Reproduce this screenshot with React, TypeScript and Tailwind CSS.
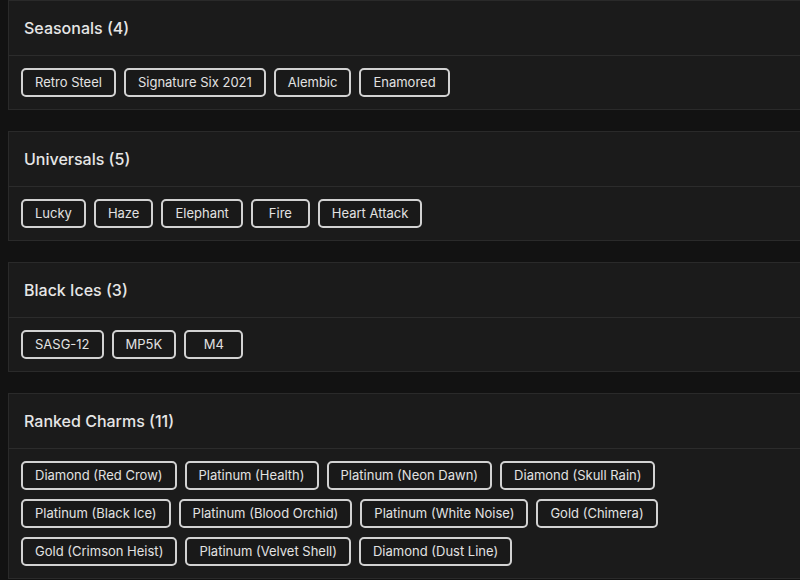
import React from "react";

const sections: { title: string; items: string[] }[] = [
  { title: "Seasonals (4)", items: ["Retro Steel", "Signature Six 2021", "Alembic", "Enamored"] },
  { title: "Universals (5)", items: ["Lucky", "Haze", "Elephant", "Fire", "Heart Attack"] },
  { title: "Black Ices (3)", items: ["SASG-12", "MP5K", "M4"] },
  {
    title: "Ranked Charms (11)",
    items: [
      "Diamond (Red Crow)",
      "Platinum (Health)",
      "Platinum (Neon Dawn)",
      "Diamond (Skull Rain)",
      "Platinum (Black Ice)",
      "Platinum (Blood Orchid)",
      "Platinum (White Noise)",
      "Gold (Chimera)",
      "Gold (Crimson Heist)",
      "Platinum (Velvet Shell)",
      "Diamond (Dust Line)",
    ],
  },
];

export default function App() {
  return (
    <div
      className="w-[800px] h-[580px] overflow-hidden bg-[#121212] pl-2 flex flex-col gap-[21px]"
      style={{ fontFamily: "Inter, 'Open Sans', sans-serif" }}
    >
      {sections.map((s) => (
        <div key={s.title} className="w-[820px] shrink-0 bg-[#1b1b1b] border border-[#2a2a2a]">
          <div className="h-[55px] flex items-center pl-[15px] border-b border-[#2c2c2c]">
            <span className="text-[16px] font-medium text-[#e6e6e6]">{s.title}</span>
          </div>
          <div className="pl-3 py-3 flex flex-wrap gap-x-2 gap-y-[9px] w-[792px]">
            {s.items.map((it) => (
              <div
                key={it}
                className="h-[29px] min-w-[59px] px-3 flex items-center justify-center border-2 border-[#d2d2d2] rounded-[5px] bg-[#191919] text-[13px] text-[#e2e2e2]"
              >
                {it}
              </div>
            ))}
          </div>
        </div>
      ))}
    </div>
  );
}
